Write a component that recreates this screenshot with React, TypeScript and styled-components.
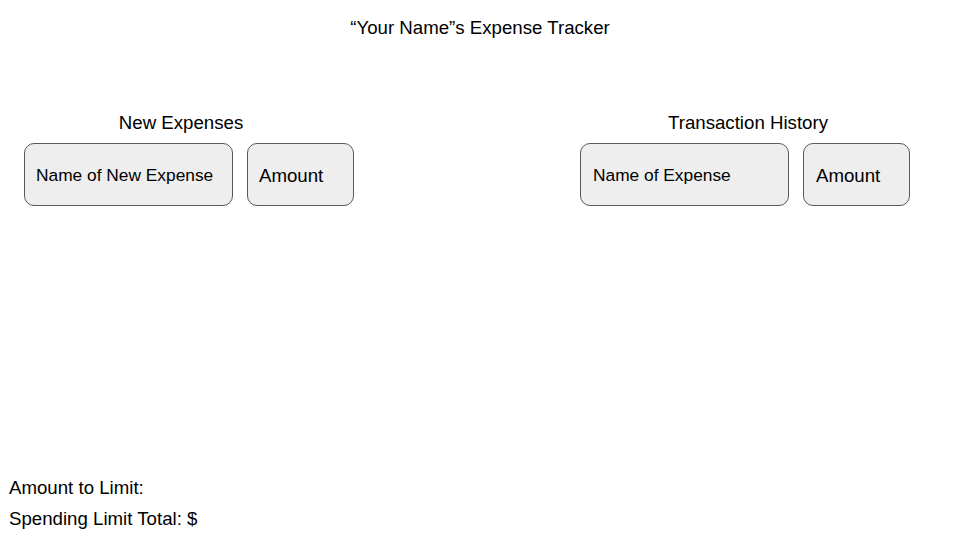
import styled, { createGlobalStyle } from 'styled-components';

const GlobalStyle = createGlobalStyle`
  html, body {
    margin: 0;
    padding: 0;
    background: #ffffff;
  }
  body {
    font-family: "Liberation Sans", Arial, sans-serif;
    color: #000000;
  }
`;

const Page = styled.div`
  width: 960px;
  height: 540px;
  display: flex;
  flex-direction: column;
  box-sizing: border-box;
  overflow: hidden;
`;

const Title = styled.h1`
  margin: 17px 0 0;
  text-align: center;
  font-size: 18.67px;
  font-weight: 400;
  line-height: 22px;
`;

const Columns = styled.div`
  display: flex;
  justify-content: space-between;
  padding: 0 50px 0 24px;
  margin-top: 72px;
`;

const Section = styled.section`
  display: flex;
  flex-direction: column;
  align-items: center;
`;

const SectionTitle = styled.h2<{ $shift: number }>`
  margin: 1px 0 9px;
  font-size: 18.67px;
  font-weight: 400;
  line-height: 22px;
  transform: translateX(${({ $shift }) => $shift}px);
`;

const FieldRow = styled.div`
  display: flex;
  gap: 14px;
`;

const Field = styled.div<{ $width: number; $size: number; $inset: number }>`
  box-sizing: border-box;
  width: ${({ $width }) => $width}px;
  height: 63px;
  display: flex;
  align-items: center;
  padding: 2px 0 0 ${({ $inset }) => $inset}px;
  background: #eeeeee;
  border: 1px solid #595959;
  border-radius: 10px;
  font-size: ${({ $size }) => $size}px;
`;

const Footer = styled.div`
  margin-top: auto;
  padding: 0 0 10px 9px;
  display: flex;
  flex-direction: column;
  gap: 9px;
  font-size: 18.67px;
  line-height: 22px;
`;

export default function App() {
  return (
    <>
      <GlobalStyle />
      <Page>
        <Title>“Your Name”s Expense Tracker</Title>
        <Columns>
          <Section>
            <SectionTitle $shift={-8}>New Expenses</SectionTitle>
            <FieldRow>
              <Field $width={209} $size={17.33} $inset={11}>Name of New Expense</Field>
              <Field $width={107} $size={18.67} $inset={11}>Amount</Field>
            </FieldRow>
          </Section>
          <Section>
            <SectionTitle $shift={3}>Transaction History</SectionTitle>
            <FieldRow>
              <Field $width={209} $size={17.33} $inset={12}>Name of Expense</Field>
              <Field $width={107} $size={18.67} $inset={12}>Amount</Field>
            </FieldRow>
          </Section>
        </Columns>
        <Footer>
          <span>Amount to Limit:</span>
          <span>Spending Limit Total: $</span>
        </Footer>
      </Page>
    </>
  );
}
